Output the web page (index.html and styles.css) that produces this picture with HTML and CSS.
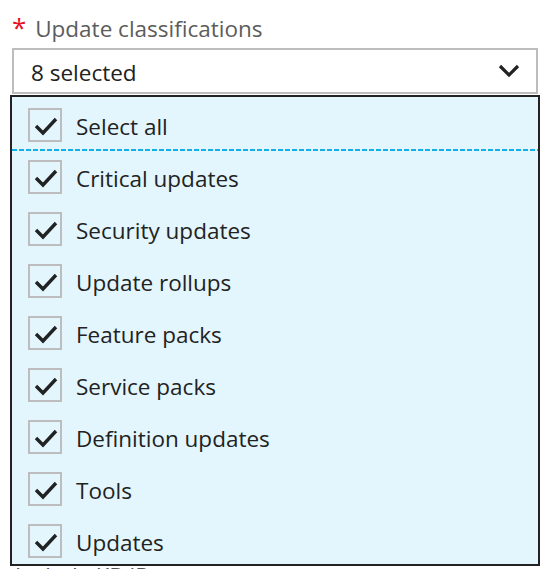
FILE: index.html
```html
<!DOCTYPE html>
<html lang="en">

<head>
    <meta charset="UTF-8">
    <meta name="viewport" content="width=device-width, initial-scale=1.0">
    <title>Update classifications</title>
    <link rel="stylesheet" href="styles.css">
</head>

<body>

    <div class="field">
        <div class="field-label"><span class="required">*</span> Update classifications</div>

        <div class="select-box">
            <span class="select-value">8 selected</span>
            <svg class="chevron" width="22" height="14" viewBox="0 0 22 14">
                <path d="M2 2 L11 11 L20 2" fill="none" stroke="#222" stroke-width="3.2" />
            </svg>
        </div>

        <!-- Dropdown -->
        <div class="dropdown">
            <label class="option option-all">
                <span class="check"><svg width="30" height="30" viewBox="0 0 30 30"><path d="M6 16 L13 23 L26 9" fill="none" stroke="#222" stroke-width="3.4" /></svg></span>
                Select all
            </label>
            <div class="separator"></div>
            <label class="option">
                <span class="check"><svg width="30" height="30" viewBox="0 0 30 30"><path d="M6 16 L13 23 L26 9" fill="none" stroke="#222" stroke-width="3.4" /></svg></span>
                Critical updates
            </label>
            <label class="option">
                <span class="check"><svg width="30" height="30" viewBox="0 0 30 30"><path d="M6 16 L13 23 L26 9" fill="none" stroke="#222" stroke-width="3.4" /></svg></span>
                Security updates
            </label>
            <label class="option">
                <span class="check"><svg width="30" height="30" viewBox="0 0 30 30"><path d="M6 16 L13 23 L26 9" fill="none" stroke="#222" stroke-width="3.4" /></svg></span>
                Update rollups
            </label>
            <label class="option">
                <span class="check"><svg width="30" height="30" viewBox="0 0 30 30"><path d="M6 16 L13 23 L26 9" fill="none" stroke="#222" stroke-width="3.4" /></svg></span>
                Feature packs
            </label>
            <label class="option">
                <span class="check"><svg width="30" height="30" viewBox="0 0 30 30"><path d="M6 16 L13 23 L26 9" fill="none" stroke="#222" stroke-width="3.4" /></svg></span>
                Service packs
            </label>
            <label class="option">
                <span class="check"><svg width="30" height="30" viewBox="0 0 30 30"><path d="M6 16 L13 23 L26 9" fill="none" stroke="#222" stroke-width="3.4" /></svg></span>
                Definition updates
            </label>
            <label class="option">
                <span class="check"><svg width="30" height="30" viewBox="0 0 30 30"><path d="M6 16 L13 23 L26 9" fill="none" stroke="#222" stroke-width="3.4" /></svg></span>
                Tools
            </label>
            <label class="option">
                <span class="check"><svg width="30" height="30" viewBox="0 0 30 30"><path d="M6 16 L13 23 L26 9" fill="none" stroke="#222" stroke-width="3.4" /></svg></span>
                Updates
            </label>
        </div>
    </div>

    <div class="next-label">Include KB IDs</div>

</body>

</html>
```

FILE: styles.css
```css
* {
    box-sizing: border-box;
}

body {
    font-family: "Open Sans", "Noto Sans", Arial, sans-serif;
    background-color: white;
    color: #222;
    margin: 0;
    padding: 0 14px 0 12px;
}

.field {
    position: relative;
}

.field-label {
    height: 48px;
    padding-top: 12px;
    font-size: 22.5px;
    line-height: 30px;
    color: #5c5c5c;
}

.required {
    color: #e81123;
    font-size: 26px;
    margin-right: 3px;
}

.select-box {
    height: 46px;
    border: 2px solid #bdbdbd;
    display: flex;
    align-items: center;
    justify-content: space-between;
    padding: 2px 16px 0 17px;
    font-size: 22.5px;
}

.chevron {
    display: block;
    margin-top: -2px;
}

.dropdown {
    position: absolute;
    top: 95px;
    left: -2px;
    width: 530px;
    height: 471px;
    background-color: #e3f6fd;
    border: 2px solid #222;
    padding-top: 2px;
    overflow: hidden;
}

.option {
    display: flex;
    align-items: flex-start;
    height: 52px;
    padding: 9px 0 0 16px;
    font-size: 22.5px;
    line-height: 38px;
}

.option-all {
    height: 50px;
}

.separator {
    height: 2px;
    background: repeating-linear-gradient(90deg, #13b0e8 0 5px, transparent 5px 7px);
}

.check {
    width: 34px;
    height: 34px;
    border: 2px solid #bdbdbd;
    margin-right: 14px;
    display: flex;
    align-items: center;
    justify-content: center;
}

.check svg {
    display: block;
}

.next-label {
    margin-top: 466px;
    padding-left: 3px;
    font-size: 22px;
    color: #555;
}
```
